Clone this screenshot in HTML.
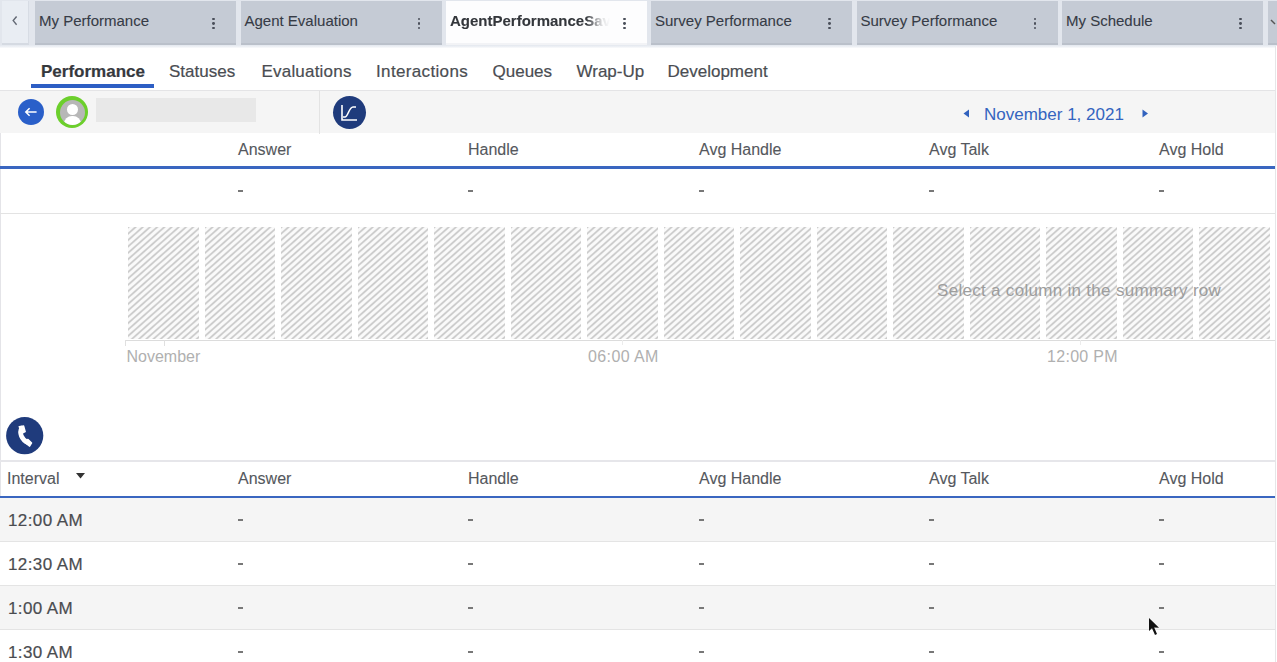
<!DOCTYPE html>
<html><head><meta charset="utf-8">
<style>
*{box-sizing:border-box;margin:0;padding:0}
html,body{width:1277px;height:662px;overflow:hidden;background:#fff;font-family:"Liberation Sans",sans-serif;position:relative}
#wrap{position:absolute;left:0;top:0;width:1277px;height:662px;overflow:hidden}
.nav,.cell{-webkit-text-stroke:0.2px currentColor}
.hdr,.tab .t{-webkit-text-stroke:0.1px currentColor}
.a{position:absolute;white-space:nowrap}
#tabs{position:absolute;left:0;top:0;width:1277px;height:48px;background:linear-gradient(#e2e6ed 0,#e2e6ed 44.5px,#e8ecf2 46px,#fafbfc 48px)}
.tab{position:absolute;top:1px;height:43.8px;width:201px;background:#c5cbd5;border-bottom:2.5px solid #bac0ca}
.tab.act{background:#fdfdfe;border-bottom:2px solid #f2f3f6;width:201px}
.tab .t{position:absolute;left:4px;top:11px;font-size:15px;color:#363b46;line-height:17px}
.dots{position:absolute;top:16.5px;width:3px;height:11px}
.dots i{position:absolute;left:0;width:2.8px;height:2.8px;border-radius:50%;background:#4a4f5a}
#sub{position:absolute;left:0;top:48px;width:1277px;height:42.5px;background:#fff;border-bottom:1.5px solid #e4e4e6}
.nav{position:absolute;top:14.2px;font-size:17px;color:#4a4d52;line-height:20px}
#tool{position:absolute;left:0;top:90.5px;width:1277px;height:42px;background:#f5f5f5}
.hdr{position:absolute;font-size:16px;color:#55585d;line-height:18px}
.dash{position:absolute;width:4.5px;height:1.5px;background:#787878}
.bar{position:absolute;top:226.8px;height:112.2px;width:70.5px;background:repeating-linear-gradient(138.4deg,#cbcbcb 0,#cbcbcb 0.6px,#fafafa 1.8px,#fafafa 3.6px,#cbcbcb 4.78px)}
.row{position:absolute;left:0;width:1277px;height:44px;border-bottom:1px solid #e4e4e4}
.cell{position:absolute;font-size:17px;color:#4a4c50;line-height:20px;letter-spacing:0.4px}
.ax{position:absolute;font-size:16px;color:#b0b0b0;line-height:18px;white-space:nowrap}
</style></head><body><div id="wrap">
<div style="position:absolute;left:0;top:0;width:1.2px;height:662px;background:#e4e4e8"></div>

<div id="tabs">
  <div style="position:absolute;left:2px;top:1px;width:27px;height:44px;background:#e9edf3;border-right:1px solid #d7dce4;border-bottom:2px solid #d5dae2"></div>
  <svg class="a" style="left:9.5px;top:14px" width="10" height="14" viewBox="0 0 10 14"><path d="M6.6 2.5 L3.2 6.6 L6.6 10.7" stroke="#626873" stroke-width="1.4" fill="none"/></svg>
<div class="tab" style="left:35px"><span class="t">My Performance</span><div class="dots" style="left:177px"><i style="top:0"></i><i style="top:4.5px"></i><i style="top:9px"></i></div></div>
<div class="tab" style="left:240.5px"><span class="t">Agent Evaluation</span><div class="dots" style="left:177px"><i style="top:0"></i><i style="top:4.5px"></i><i style="top:9px"></i></div></div>
<div class="tab act" style="left:446px"><span class="t" style="font-weight:bold;color:#33363b;width:160px;overflow:hidden;-webkit-mask-image:linear-gradient(90deg,#000 136px,rgba(0,0,0,0.15) 152px,transparent 160px);mask-image:linear-gradient(90deg,#000 136px,rgba(0,0,0,0.15) 152px,transparent 160px)">AgentPerformanceSav</span><div class="dots" style="left:177px"><i style="top:0"></i><i style="top:4.5px"></i><i style="top:9px"></i></div></div>
<div class="tab" style="left:651px"><span class="t">Survey Performance</span><div class="dots" style="left:177px"><i style="top:0"></i><i style="top:4.5px"></i><i style="top:9px"></i></div></div>
<div class="tab" style="left:856.5px"><span class="t">Survey Performance</span><div class="dots" style="left:177px"><i style="top:0"></i><i style="top:4.5px"></i><i style="top:9px"></i></div></div>
<div class="tab" style="left:1062px"><span class="t">My Schedule</span><div class="dots" style="left:177px"><i style="top:0"></i><i style="top:4.5px"></i><i style="top:9px"></i></div></div>

  <div class="tab" style="left:1268px;width:12px"></div>
  <svg class="a" style="left:1270px;top:19px" width="7" height="9" viewBox="0 0 7 9"><path d="M1 1 L5 5" stroke="#555" stroke-width="1.5" fill="none"/></svg>
</div>

<div id="sub">
  <span class="nav" style="left:41px;font-weight:bold;color:#35383d">Performance</span>
  <span class="nav" style="left:169px">Statuses</span>
  <span class="nav" style="left:261.5px;letter-spacing:0.2px">Evaluations</span>
  <span class="nav" style="left:376px;letter-spacing:0.35px">Interactions</span>
  <span class="nav" style="left:492.5px">Queues</span>
  <span class="nav" style="left:576.5px">Wrap-Up</span>
  <span class="nav" style="left:667.5px">Development</span>
  <div style="position:absolute;left:31px;top:35.5px;width:123px;height:4.5px;background:#2d5ec4"></div>
</div>

<div id="tool">
  <div style="position:absolute;left:18px;top:8px;width:26px;height:26px;border-radius:50%;background:#2a5fc9"></div>
  <svg class="a" style="left:24px;top:15px" width="14" height="12" viewBox="0 0 14 12"><path d="M1.8 6 H12.6 M5.6 2.2 L1.8 6 L5.6 9.8" stroke="#fff" stroke-width="1.5" fill="none"/></svg>
  <div style="position:absolute;left:56px;top:5.5px;width:32px;height:32px;border-radius:50%;background:#6ccf2c"></div>
  <div style="position:absolute;left:59.5px;top:9px;width:25px;height:25px;border-radius:50%;background:#b7b7b7;overflow:hidden">
    <div style="position:absolute;left:7px;top:4px;width:11px;height:11px;border-radius:50%;background:#fff"></div>
    <div style="position:absolute;left:4px;top:16px;width:17px;height:12px;border-radius:8px 8px 0 0;background:#fff"></div>
  </div>
  <div style="position:absolute;left:96px;top:7.5px;width:160px;height:23.5px;background:#e8e8e8"></div>
  <div style="position:absolute;left:319px;top:0;width:1px;height:43px;background:#e3e3e3"></div>
  <div style="position:absolute;left:333px;top:5px;width:33px;height:33px;border-radius:50%;background:#1f3b7c"></div>
  <svg class="a" style="left:333px;top:5px" width="33" height="33" viewBox="0 0 33 33"><path d="M9 9 V24 H24" stroke="#fff" stroke-width="1.6" fill="none"/><path d="M10 21 H12 C15 21 16 11 20 11 H23" stroke="#fff" stroke-width="1.6" fill="none"/></svg>
  <svg class="a" style="left:963px;top:18.8px" width="7" height="9" viewBox="0 0 7 9"><path d="M6 0.5 V8.5 L0.5 4.5Z" fill="#3262be"/></svg>
  <span class="a" style="left:984px;top:14.5px;font-size:17px;color:#3464c0;line-height:20px">November 1, 2021</span>
  <svg class="a" style="left:1142px;top:18.8px" width="7" height="9" viewBox="0 0 7 9"><path d="M0.5 0.5 V8.5 L6 4.5Z" fill="#3262be"/></svg>
</div>

<!-- summary table -->
<span class="hdr" style="left:238px;top:141px">Answer</span>
<span class="hdr" style="left:468px;top:141px">Handle</span>
<span class="hdr" style="left:699px;top:141px">Avg Handle</span>
<span class="hdr" style="left:929px;top:141px">Avg Talk</span>
<span class="hdr" style="left:1159px;top:141px">Avg Hold</span>
<div style="position:absolute;left:0;top:166px;width:1277px;height:2.5px;background:#3a66c0"></div>
<div class="dash" style="left:238px;top:190px"></div><div class="dash" style="left:468px;top:190px"></div><div class="dash" style="left:699px;top:190px"></div><div class="dash" style="left:929px;top:190px"></div><div class="dash" style="left:1159px;top:190px"></div>

<div style="position:absolute;left:0;top:213px;width:1277px;height:1px;background:#e3e3e3"></div>

<!-- chart -->
<div class="bar" style="left:128.0px"></div>
<div class="bar" style="left:204.5px"></div>
<div class="bar" style="left:281.0px"></div>
<div class="bar" style="left:357.5px"></div>
<div class="bar" style="left:434.0px"></div>
<div class="bar" style="left:510.5px"></div>
<div class="bar" style="left:587.0px"></div>
<div class="bar" style="left:663.5px"></div>
<div class="bar" style="left:740.0px"></div>
<div class="bar" style="left:816.5px"></div>
<div class="bar" style="left:893.0px"></div>
<div class="bar" style="left:969.5px"></div>
<div class="bar" style="left:1046.0px"></div>
<div class="bar" style="left:1122.5px"></div>
<div class="bar" style="left:1199.0px"></div>
<div class="bar" style="left:1275.5px"></div>

<div style="position:absolute;left:125px;top:339.5px;width:1152px;height:1px;background:#dcdcdc"></div>
<div style="position:absolute;left:125px;top:340px;width:1px;height:6px;background:#e0e0e0"></div>
<div style="position:absolute;left:163.5px;top:340px;width:1px;height:6px;background:#e0e0e0"></div>
<div style="position:absolute;left:622px;top:340px;width:1px;height:5px;background:#ececec"></div>
<div style="position:absolute;left:1080px;top:340px;width:1px;height:5px;background:#ececec"></div>
<span class="ax" style="left:126.5px;top:348px">November</span>
<span class="ax" style="left:588px;top:348px;letter-spacing:0.4px">06:00 AM</span>
<span class="ax" style="left:1047px;top:348px;letter-spacing:0.3px">12:00 PM</span>
<span class="a" style="left:937px;top:280.5px;font-size:17px;letter-spacing:0.3px;color:#9d9d9d;line-height:20px">Select a column in the summary row</span>

<!-- phone -->
<svg class="a" style="left:6px;top:417px" width="38" height="38" viewBox="0 0 38 38"><circle cx="18.7" cy="18.7" r="18.6" fill="#1f3b7c"/><path d="M15.6 11.2 C13.2 15.5 15 22.5 22.2 25.8" stroke="#fff" stroke-width="4.6" stroke-linecap="round" fill="none"/><path d="M13.2 9.6 L17.6 9 L19.2 14.6 L15.6 16.4 Z" fill="#fff" stroke="#fff" stroke-width="1.4" stroke-linejoin="round"/><path d="M18.8 25.2 L22 22.4 L25.6 26 L23.6 29.2 Z" fill="#fff" stroke="#fff" stroke-width="1.4" stroke-linejoin="round"/></svg>

<!-- interval table -->
<div style="position:absolute;left:0;top:460px;width:1277px;height:2px;background:#e6e6ea"></div>
<span class="hdr" style="left:7px;top:470px">Interval</span>
<svg class="a" style="left:76px;top:473px" width="9" height="6" viewBox="0 0 9 6"><path d="M0 0 H9 L4.5 5.5Z" fill="#333"/></svg>
<span class="hdr" style="left:238px;top:470px">Answer</span>
<span class="hdr" style="left:468px;top:470px">Handle</span>
<span class="hdr" style="left:699px;top:470px">Avg Handle</span>
<span class="hdr" style="left:929px;top:470px">Avg Talk</span>
<span class="hdr" style="left:1159px;top:470px">Avg Hold</span>
<div style="position:absolute;left:0;top:495.5px;width:1277px;height:2.5px;background:#3a66c0"></div>

<div class="row" style="top:498px;background:#f5f5f5"></div>
<div class="row" style="top:542px;background:#fff"></div>
<div class="row" style="top:586px;background:#f5f5f5"></div>
<div class="row" style="top:630px;background:#fff;border:0"></div>

<span class="cell" style="left:8px;top:510.5px">12:00 AM</span>
<span class="cell" style="left:8px;top:554.5px">12:30 AM</span>
<span class="cell" style="left:8px;top:598.5px">1:00 AM</span>
<span class="cell" style="left:8px;top:642.5px">1:30 AM</span>
<div class="dash" style="left:238px;top:519px"></div><div class="dash" style="left:468px;top:519px"></div><div class="dash" style="left:699px;top:519px"></div><div class="dash" style="left:929px;top:519px"></div><div class="dash" style="left:1159px;top:519px"></div>
<div class="dash" style="left:238px;top:563px"></div><div class="dash" style="left:468px;top:563px"></div><div class="dash" style="left:699px;top:563px"></div><div class="dash" style="left:929px;top:563px"></div><div class="dash" style="left:1159px;top:563px"></div>
<div class="dash" style="left:238px;top:607px"></div><div class="dash" style="left:468px;top:607px"></div><div class="dash" style="left:699px;top:607px"></div><div class="dash" style="left:929px;top:607px"></div><div class="dash" style="left:1159px;top:607px"></div>
<div class="dash" style="left:238px;top:651px"></div><div class="dash" style="left:468px;top:651px"></div><div class="dash" style="left:699px;top:651px"></div><div class="dash" style="left:929px;top:651px"></div><div class="dash" style="left:1159px;top:651px"></div>

<div style="position:absolute;left:1275.5px;top:46px;width:2px;height:616px;background:#fff"></div><div style="position:absolute;left:1274.5px;top:46px;width:1px;height:616px;background:#e6e6e8"></div>
<svg class="a" style="left:1147px;top:616px" width="16" height="22" viewBox="0 0 16 22"><path d="M2 2 L2 15 L5 12.2 L8 19 L10 18.1 L7.2 11.6 L12 11.8 Z" fill="#111"/></svg>
</div></body></html>
